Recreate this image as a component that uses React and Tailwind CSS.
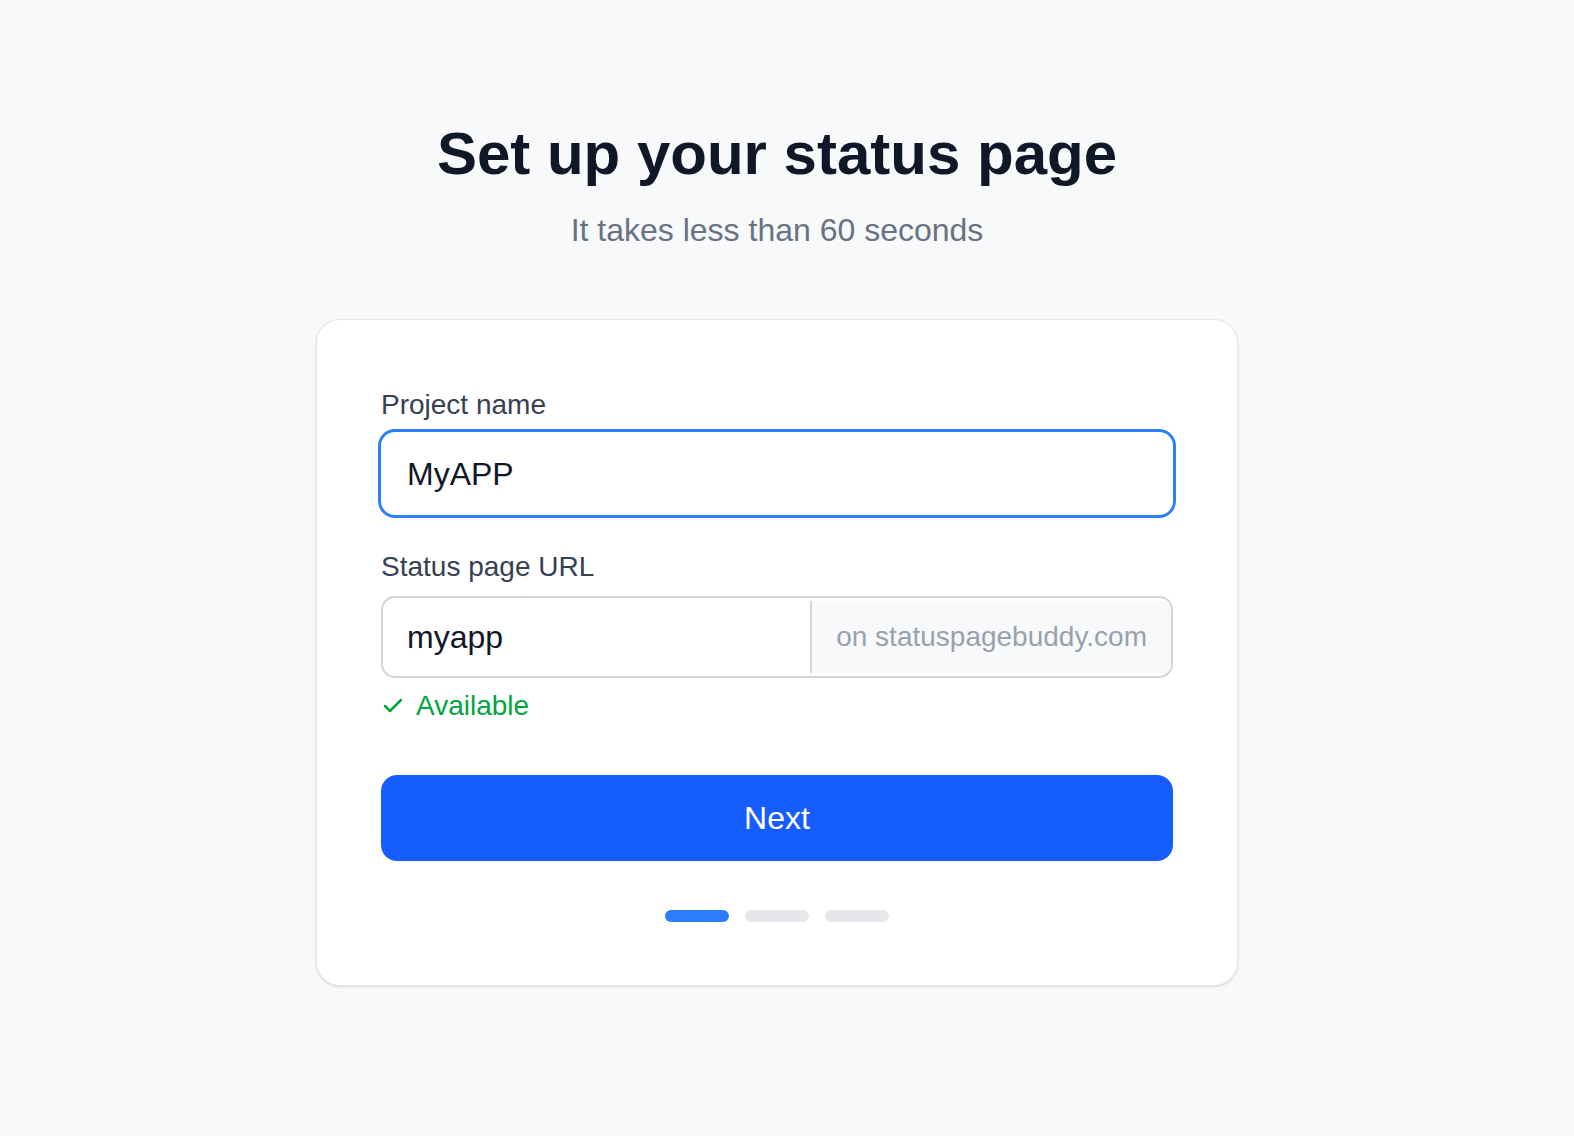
import { Check } from 'lucide-react';

function App() {
  const steps = [true, false, false];

  return (
    <div className="min-h-screen w-full bg-[#f8f9fb] flex flex-col items-center pt-[124px] pr-5 font-['Liberation_Sans',Arial,sans-serif]">
      <h1 className="text-[60px] leading-[60px] font-bold text-[#101828]">
        Set up your status page
      </h1>
      <p className="mt-[22px] text-[32px] leading-[48px] text-[#6a7282]">
        It takes less than 60 seconds
      </p>

      {/* Card */}
      <div className="mt-[65px] w-[922px] bg-white border border-gray-200 rounded-[24px] shadow-sm px-16 pt-16 pb-[63px]">
        <label className="block text-[28px] leading-[42px] text-[#364153]">Project name</label>
        <div className="mt-[6px] h-[83px] rounded-[14px] ring-[3px] ring-[#2b7fff] flex items-center px-[26px] text-[32px] text-[#101828]">
          MyAPP
        </div>

        <label className="block mt-[31px] text-[28px] leading-[42px] text-[#364153]">Status page URL</label>
        <div className="mt-2 h-[82px] rounded-[14px] border-2 border-[#d1d5dc] overflow-hidden flex">
          <div className="flex-1 flex items-center px-6 text-[32px] text-[#101828]">myapp</div>
          <div className="shrink-0 my-[3px] border-l-2 border-[#d1d5dc] bg-[#f8f9fb] px-6 flex items-center text-[28px] text-[#99a1af]">
            on statuspagebuddy.com
          </div>
        </div>

        <div className="mt-[7px] flex items-center gap-[11px] text-[28px] leading-[42px] text-[#00a63e]">
          <Check size={24} strokeWidth={2.5} className="shrink-0" />
          Available
        </div>

        <button className="mt-[48px] w-full h-[86px] rounded-[16px] bg-[#165dff] text-white text-[32px]">
          Next
        </button>

        {/* Step dots */}
        <div className="mt-[49px] flex justify-center gap-4">
          {steps.map((active, i) => (
            <div
              key={i}
              className={active ? 'w-16 h-3 rounded-full bg-[#2b7fff]' : 'w-16 h-3 rounded-full bg-[#e5e7eb]'}
            />
          ))}
        </div>
      </div>
    </div>
  );
}

export default App;
